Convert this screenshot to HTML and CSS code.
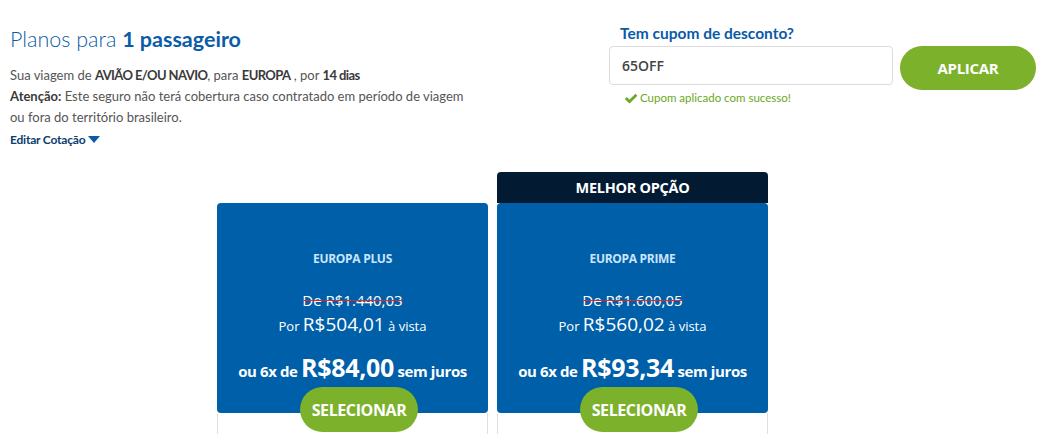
FILE: index.html
```html
<!DOCTYPE html>
<html lang="pt-BR">
<head>
<meta charset="utf-8">
<title>Planos</title>
<link rel="stylesheet" href="styles.css">
</head>
<body>
<div class="top">
  <div class="intro">
    <h1 class="headline">Planos para <strong>1 passageiro</strong></h1>
    <p class="trip">Sua viagem de <b>AVIÃO E/OU NAVIO</b>, para <b>EUROPA</b> , por <b>14 dias</b></p>
    <p class="warn"><b>Atenção:</b> Este seguro não terá cobertura caso contratado em período de viagem ou fora do território brasileiro.</p>
    <a class="edit" href="#">Editar Cotação <svg class="caret" width="12" height="8" viewBox="0 0 12 8"><path d="M0 0h12L6 7z" fill="#0b5aa6"/></svg></a>
  </div>
  <div class="coupon">
    <div class="coupon-label">Tem cupom de desconto?</div>
    <div class="coupon-row">
      <div class="coupon-input">65OFF</div>
      <button class="btn-apply">APLICAR</button>
    </div>
    <div class="coupon-ok"><svg width="14" height="11" viewBox="0 0 14 11"><path d="M0.8 6l2-2 2.7 2.7L11.4 0.8l2 2-7.9 7.8z" fill="#6aa823"/></svg>Cupom aplicado com sucesso!</div>
  </div>
</div>

<div class="plans">
  <div class="plan">
    <div class="badge badge-empty"></div>
    <div class="plan-body">
      <div class="plan-name">EUROPA PLUS</div>
      <div class="plan-old">De R$1.440,03</div>
      <div class="plan-now">Por <span class="big">R$504,01</span> à vista</div>
      <div class="plan-inst">ou 6x de <span class="huge">R$84,00</span> sem juros</div>
      <button class="btn-select">SELECIONAR</button>
    </div>
    <div class="plan-foot"></div>
  </div>
  <div class="plan">
    <div class="badge">MELHOR OPÇÃO</div>
    <div class="plan-body">
      <div class="plan-name">EUROPA PRIME</div>
      <div class="plan-old">De R$1.600,05</div>
      <div class="plan-now">Por <span class="big">R$560,02</span> à vista</div>
      <div class="plan-inst">ou 6x de <span class="huge">R$93,34</span> sem juros</div>
      <button class="btn-select">SELECIONAR</button>
    </div>
    <div class="plan-foot"></div>
  </div>
</div>
</body>
</html>
```
FILE: styles.css
```css
* { box-sizing: border-box; }
body {
  margin: 0;
  font-family: "Open Sans", "Noto Sans", sans-serif;
  background: #fff;
  overflow: hidden;
}
.top {
  display: flex;
  justify-content: space-between;
  padding: 20px 9px 0 10px;
  height: 150px;
}
.intro {
  width: 468px;
  font-family: Lato, "Open Sans", sans-serif;
}
.headline {
  margin: 3px 0 0;
  font-size: 21.5px;
  font-weight: 300;
  color: #0a5ca6;
  line-height: 32px;
}
.headline strong { font-weight: 700; }
.trip, .warn {
  margin: 0;
  font-size: 13px;
  line-height: 21px;
  color: #555;
}
.trip { margin-top: 10px; }
.trip b { font-weight: 700; color: #3a3a3a; letter-spacing: -0.6px; }
.warn b { font-weight: 700; color: #3a3a3a; }
.edit {
  display: inline-flex;
  align-items: center;
  gap: 3px;
  margin-top: 2px;
  font-size: 12px;
  font-weight: 700;
  color: #0b3d70;
  text-decoration: none;
  line-height: 18px;
  letter-spacing: -0.2px;
}
.caret { display: block; }
.coupon { width: 427px; padding-top: 2px; }
.coupon-label {
  font-family: Lato, "Open Sans", sans-serif;
  font-size: 15.5px;
  font-weight: 700;
  color: #0b5aa6;
  padding-left: 11px;
  line-height: 22px;
}
.coupon-row {
  display: flex;
  gap: 7px;
  margin-top: 2px;
}
.coupon-input {
  width: 284px;
  height: 39px;
  border: 1px solid #dcdcdc;
  border-radius: 4px;
  padding: 0 12px;
  font-size: 14px;
  font-weight: 600;
  color: #444;
  line-height: 37px;
}
.btn-apply {
  width: 136px;
  height: 44px;
  border: 0;
  border-radius: 22px;
  background: #7cb12c;
  color: #fff;
  font-family: "Open Sans", sans-serif;
  font-size: 15px;
  font-weight: 700;
  letter-spacing: -0.3px;
}
.coupon-ok {
  display: flex;
  align-items: center;
  gap: 2px;
  padding-left: 15px;
  font-family: Lato, "Open Sans", sans-serif;
  font-size: 11.5px;
  color: #6aa823;
  line-height: 16px;
}
.plans {
  display: flex;
  gap: 9px;
  padding-left: 217px;
  margin-top: 22px;
}
.plan { width: 271px; display: flex; flex-direction: column; }
.badge {
  height: 31px;
  background: #021b33;
  border-radius: 4px 4px 0 0;
  color: #fff;
  font-size: 14.5px;
  font-weight: 700;
  text-align: center;
  line-height: 32px;
  letter-spacing: -0.3px;
}
.badge-empty { visibility: hidden; }
.plan-body {
  height: 210px;
  background: #005fa9;
  border-radius: 4px;
  display: flex;
  flex-direction: column;
  align-items: center;
  color: #fff;
  text-align: center;
}
.plan-name {
  margin-top: 47px;
  font-size: 12px;
  font-weight: 700;
  line-height: 18px;
  color: #cbe5fb;
  letter-spacing: -0.3px;
}
.plan-old {
  margin-top: 22px;
  font-size: 15px;
  line-height: 20px;
  text-decoration: line-through;
  text-decoration-color: #e2242b;
}
.plan-now {
  margin-top: 4px;
  font-size: 13px;
  line-height: 24px;
  height: 24px;
}
.plan-now .big { font-size: 19px; line-height: 1; }
.plan-inst {
  margin-top: 17px;
  font-size: 15px;
  font-weight: 700;
  line-height: 28px;
  height: 28px;
  letter-spacing: -0.4px;
}
.plan-inst .huge { font-size: 25px; line-height: 1; letter-spacing: -0.3px; }
.btn-select {
  flex: none;
  margin-top: 4px;
  margin-left: 13px;
  width: 118px;
  height: 45px;
  border: 0;
  border-radius: 23px;
  background: #7cb12c;
  color: #fff;
  font-family: "Open Sans", sans-serif;
  font-size: 16px;
  font-weight: 700;
  letter-spacing: -0.4px;
}
.plan-foot {
  height: 40px;
  border-left: 1px solid #e0e0e0;
  border-right: 1px solid #e0e0e0;
}
```
